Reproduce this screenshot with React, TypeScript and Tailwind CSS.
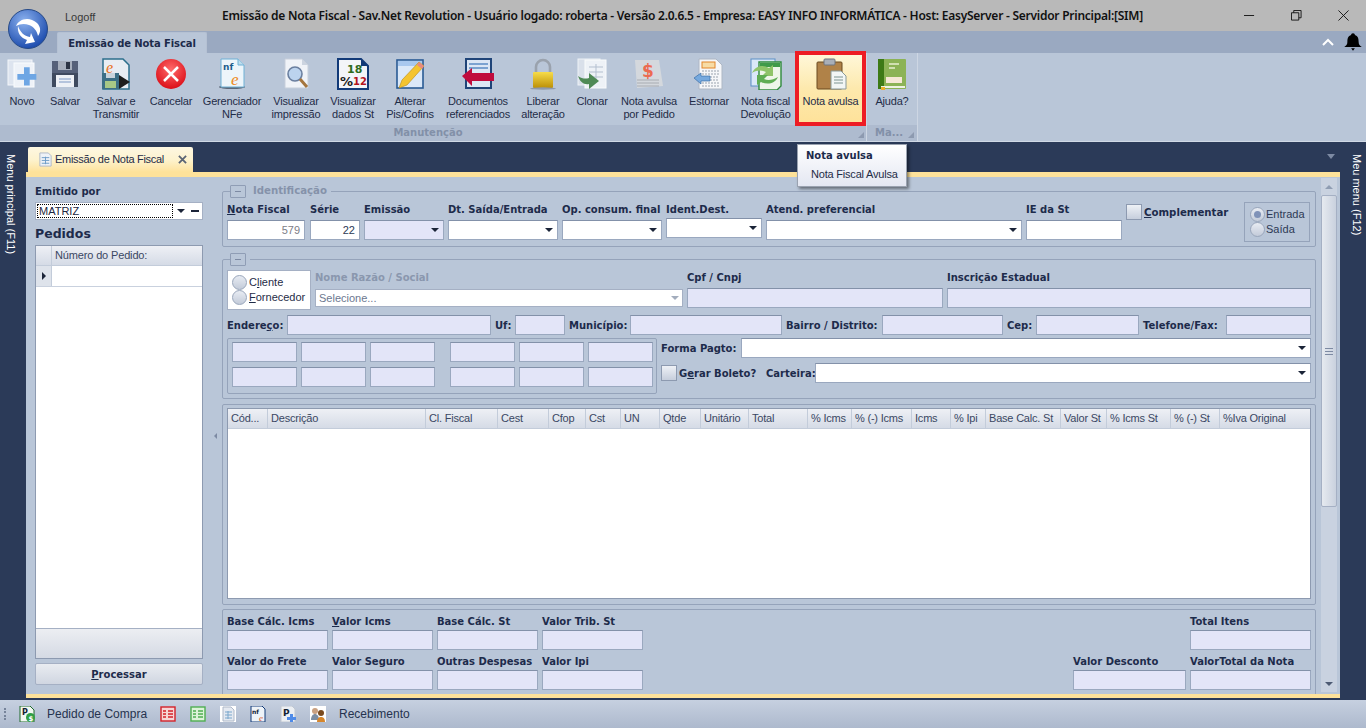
import type { ReactNode } from "react";

const font = "font-['Liberation_Sans',sans-serif]";
const bold = "font-['DejaVu_Sans',sans-serif] font-bold text-[10px] text-[#1d2b4b] whitespace-nowrap leading-none";

function Arrow({ className = "" }: { className?: string }) {
  return <span className={`w-0 h-0 border-x-[4px] border-x-transparent border-t-[4px] border-t-[#1b2438] ${className}`} />;
}

function Input({ w, white, right, combo, className = "" }: { w: number | string; white?: boolean; right?: ReactNode; combo?: boolean; className?: string }) {
  return (
    <div
      style={{ width: w }}
      className={`h-[20px] flex items-center justify-end px-[4px] shrink-0 border border-[#9aa8bf] border-t-[#8391a9] text-[11px] text-[#2d3a55] ${white ? "bg-white" : "bg-[#e3e5f8]"} ${className}`}
    >
      {right}
      {combo && <Arrow />}
    </div>
  );
}

function Field({ label, w, white, right, combo, labelH = "h-[17px] pt-[2px]" }: { label: ReactNode; w: number; white?: boolean; right?: ReactNode; combo?: boolean; labelH?: string }) {
  return (
    <div className="flex flex-col shrink-0" style={{ width: w }}>
      <div className={`${labelH} ${bold} flex items-start`}>
        <span>{label}</span>
      </div>
      <Input w={w} white={white} right={right} combo={combo} />
    </div>
  );
}

function Legend({ title }: { title?: string }) {
  return (
    <div className="absolute left-[7px] top-[-7px] flex items-center bg-[#b9c6d8] pr-[4px]">
      <div className="w-[16px] h-[13px] border border-[#8f9db5] rounded-[1px] flex items-center justify-center">
        <span className="w-[6px] h-px bg-[#7d8aa3]" />
      </div>
      {title && <span className={`${bold} !text-[#8592aa] !text-[10.2px] ml-[7px]`}>{title}</span>}
    </div>
  );
}

function Radio({ checked }: { checked?: boolean }) {
  return (
    <span className="w-[15px] h-[15px] rounded-full border border-[#99a6bb] bg-gradient-to-b from-[#e8ecf3] to-[#c3cbd9] flex items-center justify-center shrink-0">
      {checked && <span className="w-[7px] h-[7px] rounded-full bg-[#7f92b8]" />}
    </span>
  );
}

function Check() {
  return <span className="w-[16px] h-[16px] border border-[#8d9ab0] bg-gradient-to-b from-[#eef1f6] to-[#c6cedc] shrink-0" />;
}

const U = ({ children }: { children: ReactNode }) => <span className="underline">{children}</span>;

// ribbon icons
const icons: Record<string, ReactNode> = {
  novo: (
    <svg viewBox="0 0 32 32" className="w-[32px] h-[32px]">
      <rect x="2" y="2" width="24" height="25" fill="#dde4ef" stroke="#f4f6fa" />
      <rect x="8" y="5" width="20" height="24" fill="#eef2f8" stroke="#fafbfd" />
      <path d="M20 13h6v7h7v6h-7v6h-6v-6h-7v-6h7z" transform="translate(-1 -3) scale(.95)" fill="#6ea6e4" />
    </svg>
  ),
  salvar: (
    <svg viewBox="0 0 32 32" className="w-[32px] h-[32px]">
      <path d="M3 3h26v26H3z" fill="#3f4a5f" />
      <path d="M3 3h26v12H3z" fill="#56617a" />
      <rect x="9" y="3" width="14" height="9" fill="#a7afbd" />
      <rect x="17" y="4" width="4" height="7" fill="#2c3445" />
      <rect x="7" y="17" width="18" height="12" fill="#eef1f6" />
      <path d="M10 21h12M10 24h12" stroke="#7c98c4" />
    </svg>
  ),
  transmitir: (
    <svg viewBox="0 0 32 32" className="w-[32px] h-[32px]">
      <path d="M3 1h20l6 6v24H3z" fill="#e8edf3" stroke="#2c6f8c" strokeWidth="1.5" />
      <text x="6" y="15" fontSize="16" fontStyle="italic" fill="#e8701c" fontFamily="Liberation Serif">e</text>
      <rect x="2" y="15" width="17" height="16" fill="#3d6f86" />
      <rect x="6" y="15" width="9" height="5" fill="#c9d4dc" />
      <rect x="5" y="23" width="11" height="7" fill="#a8c886" />
      <path d="M19 17l11 7-11 7z" fill="#1d1d1d" />
    </svg>
  ),
  cancelar: (
    <svg viewBox="0 0 32 32" className="w-[32px] h-[32px]">
      <defs>
        <radialGradient id="rc" cx=".5" cy=".35" r=".7">
          <stop offset="0" stopColor="#ff6a6a" />
          <stop offset="1" stopColor="#d90812" />
        </radialGradient>
      </defs>
      <circle cx="16" cy="16" r="15" fill="url(#rc)" />
      <path d="M9 9l14 14M23 9L9 23" stroke="#fff" strokeWidth="2.5" />
    </svg>
  ),
  nfe: (
    <svg viewBox="0 0 32 32" className="w-[32px] h-[32px]">
      <ellipse cx="16" cy="29" rx="13" ry="2" fill="#5d6879" />
      <path d="M5 1h17l6 6v22H5z" fill="#edf5fa" stroke="#6eb1d6" />
      <path d="M22 1v6h6" fill="#bcdcec" stroke="#6eb1d6" />
      <text x="7" y="12" fontSize="9" fontWeight="700" fill="#1e5d8c" fontFamily="DejaVu Sans">nf</text>
      <text x="15" y="27" fontSize="17" fontStyle="italic" fill="#ee8a22" fontFamily="Liberation Serif">e</text>
    </svg>
  ),
  visualizar: (
    <svg viewBox="0 0 32 32" className="w-[32px] h-[32px]">
      <path d="M5 1h17l6 6v23H5z" fill="#f0f3f8" stroke="#c7cfdb" />
      <path d="M22 1v6h6z" fill="#ccd4e0" />
      <circle cx="15" cy="16" r="7" fill="#bcd3ee" stroke="#6a7f9f" strokeWidth="1.6" />
      <path d="M20 21l7 8" stroke="#a4753d" strokeWidth="3" />
    </svg>
  ),
  dados: (
    <svg viewBox="0 0 32 32" className="w-[32px] h-[32px]">
      <path d="M1 1h23l7 7v23H1z" fill="#f3f5f8" stroke="#123a78" strokeWidth="2" />
      <path d="M24 1v7h7z" fill="#123a78" />
      <text x="10" y="15" fontSize="11" fontWeight="700" fill="#2e6b1c" fontFamily="DejaVu Sans">18</text>
      <text x="3" y="28" fontSize="13" fontWeight="700" fill="#1c1c1c" fontFamily="DejaVu Sans">%</text>
      <text x="16" y="27" fontSize="10" fontWeight="700" fill="#b3141c" fontFamily="DejaVu Sans">12</text>
    </svg>
  ),
  alterar: (
    <svg viewBox="0 0 32 32" className="w-[32px] h-[32px]">
      <rect x="3" y="2" width="26" height="28" fill="#dbe8f8" stroke="#2a5a94" strokeWidth="1.6" />
      <rect x="4" y="3" width="24" height="5" fill="#a9c8ee" />
      <path d="M25 4l5 4-17 19-8 3 3-8z" fill="#f4c430" stroke="#b98a14" strokeWidth=".6" />
      <path d="M25 4l5 4-2 3-5-4z" fill="#e88a80" />
    </svg>
  ),
  documentos: (
    <svg viewBox="0 0 32 32" className="w-[32px] h-[32px]">
      <rect x="4" y="1" width="25" height="29" fill="#dbe6f4" stroke="#1f4478" strokeWidth="2" />
      <path d="M7 6h19M7 10h19" stroke="#7ba2d0" strokeWidth="2" />
      <path d="M0 18l10-8v5h22v8H10v5z" fill="#c00b3c" />
    </svg>
  ),
  liberar: (
    <svg viewBox="0 0 32 32" className="w-[32px] h-[32px]">
      <defs>
        <linearGradient id="lk" x1="0" x2="0" y1="0" y2="1">
          <stop offset="0" stopColor="#f7dc4a" />
          <stop offset="1" stopColor="#bc8f06" />
        </linearGradient>
      </defs>
      <path d="M9 14V9a7 7 0 0 1 14 0v5" fill="none" stroke="#9aa2ad" strokeWidth="2.6" />
      <rect x="6" y="14" width="20" height="16" rx="1" fill="url(#lk)" />
      <ellipse cx="16" cy="30.500" rx="13" ry="1.200" fill="#8e99aa" />
    </svg>
  ),
  clonar: (
    <svg viewBox="0 0 32 32" className="w-[32px] h-[32px]">
      <rect x="2" y="1" width="22" height="26" fill="#d9e0ea" stroke="#eef1f6" />
      <rect x="9" y="2" width="21" height="28" fill="#eef2f7" stroke="#fafbfc" />
      <path d="M13 9h14M13 14h14M13 19h14M20 6v18" stroke="#b3bfcf" />
      <path d="M2 18c4 3 8 3 11 2v-5l10 8-10 8v-5c-5 1-9-2-11-8z" fill="#4f8a56" />
    </svg>
  ),
  avulsaPedido: (
    <svg viewBox="0 0 32 32" className="w-[32px] h-[32px]">
      <path d="M2 2h24l4 26-26 2z" fill="#d4d8dd" />
      <text x="9" y="19" fontSize="17" fontWeight="700" fill="#ec6b50" fontFamily="DejaVu Sans">$</text>
      <path d="M4 22h22M4 25h22M4 28h22" stroke="#a8acb2" />
    </svg>
  ),
  estornar: (
    <svg viewBox="0 0 32 32" className="w-[32px] h-[32px]">
      <path d="M6 1h17l6 6v24H6z" fill="#f6f7f9" stroke="#aeb7c4" />
      <rect x="9" y="4" width="13" height="6" fill="#f7dca6" stroke="#e2862a" />
      <path d="M9 13h17M9 16h17M14 19h12M14 22h12M9 25h17M9 28h17" stroke="#9aa3ae" strokeDasharray="2 1" />
      <path d="M1 20l7-5v3h9v5H8v3z" fill="#76a9de" stroke="#3b6ea8" strokeWidth=".7" />
    </svg>
  ),
  devolucao: (
    <svg viewBox="0 0 32 32" className="w-[32px] h-[32px]">
      <rect x="1" y="1" width="24" height="27" fill="#dae8f8" stroke="#5d8fc6" />
      <path d="M9 4h22v24l-4 4H9z" fill="#eef6ea" stroke="#2f8a3c" strokeWidth="1.4" />
      <rect x="10" y="5" width="20" height="4" fill="#3f9a4a" />
      <path d="M2 15c3-7 11-9 17-5l4-3v11H12l4-4c-4-2-9-2-14 1z" fill="#8fc46a" />
      <path d="M28 19c-3 7-11 8-17 5l-4 3V17h11l-4 4c4 2 9 1 14-2z" fill="#5fae54" />
    </svg>
  ),
  avulsa: (
    <svg viewBox="0 0 32 32" className="w-[32px] h-[32px]">
      <rect x="2" y="4" width="25" height="27" rx="1" fill="#b08248" stroke="#6b4a20" />
      <rect x="9" y="1" width="11" height="6" rx="1" fill="#a9afb8" stroke="#6f757e" />
      <path d="M16 13h10l5 5v13H16z" fill="#f2f6f5" stroke="#8a9a98" />
      <path d="M19 19h9M19 22h9M19 25h9" stroke="#7d9490" />
    </svg>
  ),
  ajuda: (
    <svg viewBox="0 0 32 32" className="w-[32px] h-[32px]">
      <rect x="4" y="1" width="26" height="30" rx="1" fill="#8cb356" />
      <rect x="2" y="1" width="6" height="30" fill="#3d7a16" />
      <path d="M13 6h10M13 10h6" stroke="#e6f0d0" strokeWidth="1.600" />
      <rect x="10" y="19" width="16" height="6" fill="#f6e8d6" />
      <rect x="5" y="28" width="24" height="2" fill="#eef3e2" />
      <rect x="5" y="29" width="4" height="3" fill="#eab12c" />
    </svg>
  ),
};

const ribbon: { w: number; icon: string; label: string[] }[] = [
  { w: 44, icon: "novo", label: ["Novo"] },
  { w: 42, icon: "salvar", label: ["Salvar"] },
  { w: 60, icon: "transmitir", label: ["Salvar e", "Transmitir"] },
  { w: 50, icon: "cancelar", label: ["Cancelar"] },
  { w: 72, icon: "nfe", label: ["Gerenciador", "NFe"] },
  { w: 56, icon: "visualizar", label: ["Visualizar", "impressão"] },
  { w: 58, icon: "dados", label: ["Visualizar", "dados St"] },
  { w: 56, icon: "alterar", label: ["Alterar", "Pis/Cofins"] },
  { w: 80, icon: "documentos", label: ["Documentos", "referenciados"] },
  { w: 50, icon: "liberar", label: ["Liberar", "alteração"] },
  { w: 48, icon: "clonar", label: ["Clonar"] },
  { w: 66, icon: "avulsaPedido", label: ["Nota avulsa", "por Pedido"] },
  { w: 54, icon: "estornar", label: ["Estornar"] },
  { w: 59, icon: "devolucao", label: ["Nota fiscal", "Devolução"] },
];

function RibbonLabel({ lines }: { lines: string[] }) {
  return (
    <div className="text-[11px] tracking-[-0.2px] leading-[13px] text-[#1f2c47] text-center whitespace-nowrap mt-[5px]">
      {lines.map((l) => (
        <div key={l}>{l}</div>
      ))}
    </div>
  );
}

function Corner() {
  return <span className="w-0 h-0 border-l-[6px] border-l-transparent border-b-[6px] border-b-[#8d9ab0]" />;
}

function Ribbon() {
  return (
    <div className="h-[89px] bg-[#b9c6d8] flex shrink-0 border-b border-[#d0d9e5]">
      <div className="w-[867px] flex flex-col relative border-r border-[#cdd6e3]">
        <div className="flex h-[72px] shrink-0">
          {ribbon.map((r) => (
            <div key={r.icon} style={{ width: r.w }} className="flex flex-col items-center pt-[5px] shrink-0">
              {icons[r.icon]}
              <RibbonLabel lines={r.label} />
            </div>
          ))}
        </div>
        <div className="flex-1 bg-[#aebbcf] flex items-center justify-center pr-[10px]">
          <span className={`${bold} !text-[#8290a8]`}>Manutenção</span>
        </div>
        <div className="absolute right-[2px] bottom-[3px] flex"><Corner /></div>
        <div className="absolute left-[795px] top-[-2px] w-[71px] h-[75px] border-[4px] border-[#ed1c24] bg-gradient-to-b from-[#fff7d8] via-[#fde9ad] to-[#fee29a] flex flex-col items-center pt-[3px]">
          {icons.avulsa}
          <RibbonLabel lines={["Nota avulsa"]} />
        </div>
      </div>
      <div className="w-[51px] flex flex-col relative border-r border-[#cdd6e3]">
        <div className="h-[72px] flex flex-col items-center pt-[5px]">
          {icons.ajuda}
          <RibbonLabel lines={["Ajuda?"]} />
        </div>
        <div className="flex-1 bg-[#aebbcf] flex items-center pl-[8px]">
          <span className={`${bold} !text-[#8290a8]`}>Ma...</span>
        </div>
        <div className="absolute right-[3px] bottom-[3px] flex"><Corner /></div>
      </div>
    </div>
  );
}

function TitleBar() {
  return (
    <div className="h-[31px] bg-[#b9b9b9] flex items-center shrink-0 relative">
      <span className="absolute left-[65px] top-[9px] text-[11px] text-[#3a3a3a]">Logoff</span>
      <div className="ml-[222px] font-['Noto_Sans',sans-serif] text-[12px] tracking-[-0.25px] font-semibold text-[#111] whitespace-nowrap w-[921px]">
        Emissão de Nota Fiscal - Sav.Net Revolution - Usuário logado: roberta - Versão 2.0.6.5 - Empresa: EASY INFO INFORMÁTICA - Host: EasyServer - Servidor Principal:[SIM]
      </div>
      <div className="ml-auto flex items-center mr-[17px] gap-[36px]">
        <svg viewBox="0 0 12 12" className="w-[11px] h-[11px]"><path d="M0 6h11" stroke="#111" /></svg>
        <svg viewBox="0 0 12 12" className="w-[11px] h-[11px]"><path d="M.5 3h8v8h-8zM3 3V.5h8v8H8.500" fill="none" stroke="#111" /></svg>
        <svg viewBox="0 0 12 12" className="w-[11px] h-[11px]"><path d="M.5.5l11 11M11.500.5l-11 11" stroke="#111" /></svg>
      </div>
    </div>
  );
}

function TabRow() {
  return (
    <div className="h-[22px] bg-[#9aa9c1] flex items-end shrink-0">
      <div className="ml-[57px] w-[150px] h-[21px] bg-[#b9c6d8] rounded-t-[2px] border-t border-x border-[#b5c1d3] flex items-center justify-center">
        <span className="font-['DejaVu_Sans',sans-serif] text-[10px] tracking-[-0.1px] font-bold text-[#1d2b4b] whitespace-nowrap">Emissão de Nota Fiscal</span>
      </div>
      <div className="ml-auto flex items-center h-full mr-[3px] gap-[9px]">
        <svg viewBox="0 0 12 8" className="w-[12px] h-[8px]"><path d="M1 7l5-5 5 5" fill="none" stroke="#fff" strokeWidth="2" /></svg>
        <svg viewBox="0 0 16 16" className="w-[20px] h-[20px]"><path d="M8 1c1 0 1.500.7 1.500 1.300C12 3 12.500 5 12.500 8c0 2 1 3 2.500 4H1c1.500-1 2.500-2 2.500-4 0-3 .5-5 3-5.700C6.500 1.700 7 1 8 1zM6.500 13h3L8 15z" fill="#000" /></svg>
      </div>
    </div>
  );
}

function LeftPanel() {
  return (
    <div className="w-[168px] ml-[9px] shrink-0 flex flex-col">
      <div className={`${bold} h-[25px] pt-[10px]`}>Emitido por</div>
      <div className="h-[18px] bg-white border border-[#a5b0c4] flex items-center pl-[1px] pr-[3px]">
        <div className="w-[138px] h-[14px] border border-dotted border-black text-[11px] leading-none text-[#1c2740] pl-[1px] flex items-center">MATRIZ</div>
        <Arrow className="ml-[4px]" />
        <span className="w-[8px] h-[2px] bg-[#1b2438] ml-[6px]" />
      </div>
      <div className="h-[25px] pt-[3px] flex items-center font-['DejaVu_Sans',sans-serif] font-bold text-[12.500px] text-[#1d2b4b]">Pedidos</div>
      <div className="h-[414px] border border-[#8d9ab0] bg-white flex flex-col">
        <div className="flex h-[20px] shrink-0 bg-gradient-to-b from-[#eef0f5] to-[#d5dbe6] border-b border-[#c3ccda]">
          <div className="w-[16px] border-r border-[#c3ccda]" />
          <span className="pl-[3px] text-[11px] tracking-[-0.15px] text-[#3a4763] leading-[19px] whitespace-nowrap">Número do Pedido:</span>
        </div>
        <div className="flex h-[21px] shrink-0 border-b border-[#c9d1de]">
          <div className="w-[16px] bg-[#dee3eb] border-r border-[#c3ccda] flex items-center justify-center">
            <span className="w-0 h-0 border-y-[4px] border-y-transparent border-l-[4px] border-l-[#1b2438]" />
          </div>
        </div>
        <div className="flex-1" />
        <div className="h-[30px] shrink-0 border-t border-[#a5b0c4] bg-gradient-to-b from-[#eceef2] to-[#d5dae4]" />
      </div>
      <div className="mt-[4px] h-[22px] rounded-[2px] border border-[#a5b0c4] bg-gradient-to-b from-[#e9ecf1] to-[#d0d6e1] flex items-center justify-center">
        <span className={`${bold} pt-[2px]`}><U>P</U>rocessar</span>
      </div>
    </div>
  );
}

const columns: [string, number][] = [
  ["Cód...", 40], ["Descrição", 158], ["Cl. Fiscal", 72], ["Cest", 51], ["Cfop", 37], ["Cst", 35], ["UN", 39],
  ["Qtde", 41], ["Unitário", 48], ["Total", 59], ["% Icms", 44], ["% (-) Icms", 60], ["Icms", 39], ["% Ipi", 35],
  ["Base Calc. St", 75], ["Valor St", 46], ["% Icms St", 64], ["% (-) St", 49], ["%Iva Original", 90],
];

function Group({ className = "", children }: { className?: string; children: ReactNode }) {
  return <div className={`relative w-[1094px] ml-[2px] border border-[#95a3ba] rounded-[2px] shrink-0 px-[4px] ${className}`}>{children}</div>;
}

function Lab({ w, children, className = "" }: { w?: number; children: ReactNode; className?: string }) {
  return <span style={{ width: w }} className={`${bold} pt-[2px] shrink-0 ${className}`}>{children}</span>;
}

function Form() {
  return (
    <div className="w-[1098px] shrink-0 flex flex-col">
      <Group className="mt-[14px] h-[56px] pt-[11px]">
        <Legend title="Identificação" />
        <div className="flex items-start">
          <Field label={<><U>N</U>ota Fiscal</>} w={78} white right={<span className="text-[#7d7d86]">579</span>} />
          <div className="w-[5px]" />
          <Field label="Série" w={50} white right="22" />
          <div className="w-[4px]" />
          <Field label="Emissão" w={80} combo />
          <div className="w-[4px]" />
          <Field label="Dt. Saída/Entrada" w={110} white combo />
          <div className="w-[4px]" />
          <Field label="Op. consum. final" w={100} white combo />
          <div className="w-[4px]" />
          <Field label="Ident.Dest." w={96} white combo labelH="h-[15px] pt-[2px]" />
          <div className="w-[4px]" />
          <Field label="Atend. preferencial" w={256} white combo />
          <div className="w-[4px]" />
          <Field label="IE da St" w={96} white />
          <div className="w-[4px]" />
          <div className="w-[118px] flex items-center gap-[2px] mt-[1px]">
            <Check />
            <Lab className="!text-[10.2px]"><U>C</U>omplementar</Lab>
          </div>
          <div className="w-[66px] h-[40px] -mt-[1px] border border-[#95a3ba] flex flex-col justify-center pl-[5px] text-[11px] text-[#2d3a55] leading-none">
            <div className="flex items-center gap-[1px] h-[15px]"><Radio checked />Entrada</div>
            <div className="flex items-center gap-[1px] h-[15px]"><Radio />Saída</div>
          </div>
        </div>
      </Group>

      <Group className="mt-[12px] h-[140px] pt-[10px]">
        <Legend />
        <div className="flex items-start">
          <div className="w-[84px] h-[40px] bg-white border border-[#a5b0c4] flex flex-col justify-center pl-[4px] text-[11px] text-[#1f2c47] leading-none">
            <div className="flex items-center gap-[2px] h-[15px]"><Radio /><span>C<U>l</U>iente</span></div>
            <div className="flex items-center gap-[2px] h-[15px]"><Radio /><span><U>F</U>ornecedor</span></div>
          </div>
          <div className="w-[4px]" />
          <div className="flex flex-col shrink-0 w-[368px] pt-[1px]">
            <div className={`${bold} !text-[#8a97ae] h-[18px] pt-[2px]`}>Nome Razão / Social</div>
            <div className="h-[18px] bg-white border border-[#a5b0c4] flex items-center justify-between px-[3px] text-[11px] text-[#6c7890]">
              Selecione...
              <span className="w-0 h-0 border-x-[4px] border-x-transparent border-t-[4px] border-t-[#a3adbd]" />
            </div>
          </div>
          <div className="w-[4px]" />
          <div className="pt-[1px]"><Field label="Cpf / Cnpj" w={256} /></div>
          <div className="w-[4px]" />
          <div className="pt-[1px]"><Field label="Inscrição Estadual" w={364} /></div>
        </div>
        <div className="flex items-center mt-[5px] h-[19px]">
          <Lab w={60}>Endere<U>ç</U>o:</Lab>
          <Input w={204} />
          <Lab w={20} className="ml-[4px]">Uf:</Lab>
          <Input w={50} />
          <Lab w={61} className="ml-[4px]">Município:</Lab>
          <Input w={152} />
          <Lab w={96} className="ml-[4px]">Bairro / Distrito:</Lab>
          <Input w={121} />
          <Lab w={29} className="ml-[4px]">Cep:</Lab>
          <Input w={103} />
          <Lab w={83} className="ml-[4px]">Telefone/Fax:</Lab>
          <Input w={85} />
        </div>
        <div className="flex mt-[4px] items-start">
          <div className="w-[430px] h-[56px] border border-[#95a3ba] rounded-[2px] pl-[4px] pr-[3px] pt-[3px] flex flex-col gap-[5px] shrink-0">
            {[0, 1].map((row) => (
              <div key={row} className="flex gap-[4px]">
                <Input w={65} /><Input w={65} /><Input w={65} />
                <div className="w-[7px]" />
                <Input w={65} /><Input w={65} /><Input w={65} />
              </div>
            ))}
          </div>
          <div className="flex flex-col ml-[4px] w-[650px]">
            <div className="flex items-center">
              <Lab w={80}>Forma Pagto:</Lab>
              <Input w={570} white combo />
            </div>
            <div className="flex items-center mt-[5px]">
              <Check />
              <Lab w={87} className="ml-[2px]">G<U>e</U>rar Boleto?</Lab>
              <Lab w={49}>Carteira:</Lab>
              <Input w={496} white combo />
            </div>
          </div>
        </div>
      </Group>

      <Group className="mt-[5px] h-[201px] pt-[3px]">
        <div className="w-[1084px] h-[191px] border border-[#8d9ab0] bg-white">
          <div className="flex h-[20px] bg-gradient-to-b from-[#eef0f5] to-[#d5dbe6] border-b border-[#c3ccda]">
            {columns.map(([name, w]) => (
              <div key={name} style={{ width: w }} className="shrink-0 border-r border-[#c3ccda] px-[3px] text-[11px] tracking-[-0.2px] leading-[18px] text-[#3a4763] whitespace-nowrap overflow-hidden last:border-r-0">
                {name}
              </div>
            ))}
          </div>
        </div>
      </Group>

      <Group className="mt-[4px] h-[100px] pt-[4px]">
        <div className="flex">
          <Field label="Base Cálc. Icms" w={101} labelH="h-[16px] pt-[3px]" />
          <div className="w-[4px]" />
          <Field label={<><U>V</U>alor Icms</>} w={101} labelH="h-[16px] pt-[3px]" />
          <div className="w-[4px]" />
          <Field label="Base Cálc. St" w={101} labelH="h-[16px] pt-[3px]" />
          <div className="w-[4px]" />
          <Field label="Valor Trib. St" w={101} labelH="h-[16px] pt-[3px]" />
          <div className="ml-auto"><Field label="Total Itens" w={121} labelH="h-[16px] pt-[3px]" /></div>
        </div>
        <div className="flex">
          <Field label="Valor do Frete" w={101} labelH="h-[20px] pt-[7px]" />
          <div className="w-[4px]" />
          <Field label="Valor Seguro" w={101} labelH="h-[20px] pt-[7px]" />
          <div className="w-[4px]" />
          <Field label="Outras Despesas" w={101} labelH="h-[20px] pt-[7px]" />
          <div className="w-[4px]" />
          <Field label="Valor Ipi" w={101} labelH="h-[20px] pt-[7px]" />
          <div className="ml-auto"><Field label="Valor Desconto" w={113} labelH="h-[20px] pt-[7px]" /></div>
          <div className="w-[4px]" />
          <Field label="ValorTotal da Nota" w={121} labelH="h-[20px] pt-[7px]" />
        </div>
      </Group>
    </div>
  );
}

function ScrollBar() {
  return (
    <div className="w-[16px] ml-[3px] mt-[1px] h-[514px] shrink-0 bg-[#c9d2e0] flex flex-col">
      <div className="h-[17px] flex items-center justify-center">
        <span className="w-0 h-0 border-x-[4px] border-x-transparent border-b-[4px] border-b-[#8f9db3]" />
      </div>
      <div className="h-[312px] rounded-[2px] border border-[#a5b0c4] bg-gradient-to-r from-[#e6eaf0] to-[#c9d1de] flex items-center justify-center">
        <div className="w-[8px] h-[7px] border-y border-[#7d8aa3] flex items-center"><span className="w-full h-px bg-[#7d8aa3]" /></div>
      </div>
      <div className="flex-1" />
      <div className="h-[17px] flex items-center justify-center">
        <span className="w-0 h-0 border-x-[4px] border-x-transparent border-t-[4px] border-t-[#4d5a73]" />
      </div>
    </div>
  );
}

function StatusIcon({ children }: { children: ReactNode }) {
  return <svg viewBox="0 0 16 16" className="w-[16px] h-[16px] shrink-0">{children}</svg>;
}

function StatusBar() {
  return (
    <div className="h-[28px] mt-auto bg-gradient-to-b from-[#c6d0e0] to-[#adb9cd] flex items-center shrink-0 text-[12px] text-[#26334f]">
      <div className="ml-[4px] w-[2px] h-[12px] flex flex-col justify-between">
        {[0, 1, 2, 3].map((i) => <span key={i} className="w-[2px] h-[2px] bg-[#76839a]" />)}
      </div>
      <div className="ml-[13px]">
        <StatusIcon>
          <path d="M1 0h10l4 4v12H1z" fill="#f2f7f0" stroke="#1e6b2c" />
          <text x="3" y="9" fontSize="8" fontWeight="700" fill="#123" fontFamily="DejaVu Sans">P</text>
          <circle cx="11.500" cy="11.500" r="4.500" fill="#2f9e44" />
          <text x="9.500" y="14.500" fontSize="7" fontWeight="700" fill="#fff" fontFamily="DejaVu Sans">$</text>
        </StatusIcon>
      </div>
      <span className="ml-[12px] whitespace-nowrap w-[113px]">Pedido de Compra</span>
      <StatusIcon>
        <rect x="1" y="1" width="14" height="14" fill="#f6d5d5" stroke="#d3222a" strokeWidth="1.400" />
        <path d="M3 5h3M8 5h5M3 8h3M8 8h5M3 11h3M8 11h5" stroke="#d3222a" strokeWidth="1.400" />
      </StatusIcon>
      <div className="ml-[14px]">
        <StatusIcon>
          <rect x="1" y="1" width="14" height="14" fill="#dcf3d8" stroke="#4fae52" strokeWidth="1.400" />
          <path d="M3 5h3M8 5h5M3 8h3M8 8h5M3 11h3M8 11h5" stroke="#4fae52" strokeWidth="1.400" />
        </StatusIcon>
      </div>
      <div className="ml-[14px]">
        <StatusIcon>
          <rect width="16" height="16" fill="#fff" />
          <path d="M3 1h8l3 3v11H3z" fill="#e4e9f1" stroke="#aeb8c8" />
          <path d="M5 6h7M5 9h7M5 12h7M8 5v8" stroke="#7ba7cc" />
        </StatusIcon>
      </div>
      <div className="ml-[14px]">
        <StatusIcon>
          <path d="M1 0h11l3 3v13H1z" fill="#eef3f8" stroke="#123a78" />
          <text x="2" y="8" fontSize="6" fontWeight="700" fill="#123" fontFamily="DejaVu Sans">nf</text>
          <text x="9" y="15" fontSize="9" fontStyle="italic" fill="#d9541e" fontFamily="Liberation Serif">e</text>
        </StatusIcon>
      </div>
      <div className="ml-[14px]">
        <StatusIcon>
          <path d="M1 0h11l3 3v13H1z" fill="#eceff3" stroke="#c0c7d1" />
          <text x="3" y="10" fontSize="9" fontWeight="700" fill="#123" fontFamily="DejaVu Sans">P</text>
          <path d="M10 8h3v3h3v3h-3v2h-3v-2H7v-3h3z" fill="#4f8be8" />
        </StatusIcon>
      </div>
      <div className="ml-[14px]">
        <StatusIcon>
          <rect width="16" height="16" fill="#fff" />
          <circle cx="5" cy="5" r="3" fill="#c9a080" />
          <path d="M1 14c0-4 2-6 4-6s4 2 4 6z" fill="#7d8ea3" />
          <circle cx="11" cy="7" r="3" fill="#7a4a1e" />
          <path d="M7 16c0-4 2-5 4-5s4 1 4 5z" fill="#d6862c" />
        </StatusIcon>
      </div>
      <span className="ml-[13px] whitespace-nowrap">Recebimento</span>
    </div>
  );
}

export default function App() {
  return (
    <div className={`w-[1366px] h-[728px] relative overflow-hidden flex flex-col bg-[#2b3a58] ${font}`}>
      <TitleBar />
      <TabRow />
      <Ribbon />

      <div className="flex h-[556px] shrink-0">
        <div className="w-[26px] shrink-0 flex justify-start pl-[5px] pt-[12px]">
          <span className="[writing-mode:vertical-rl] text-[11px] text-white whitespace-nowrap leading-none">Menu principal (F11)</span>
        </div>
        <div className="w-[1314px] shrink-0 flex flex-col">
          <div className="h-[30px] shrink-0 flex items-end relative">
            <div className="ml-[2px] w-[165px] h-[25px] rounded-t-[2px] bg-gradient-to-b from-[#fdf7e2] via-[#fdf3cf] to-[#fee29a] flex items-center">
              <svg viewBox="0 0 16 16" className="w-[15px] h-[15px] ml-[10px] shrink-0">
                <path d="M2 1h9l3 3v11H2z" fill="#eef2f7" stroke="#aeb8c8" />
                <path d="M4 6h8M4 9h8M4 12h8M8 5v8" stroke="#6d9cc8" />
              </svg>
              <span className="ml-[2px] text-[11px] tracking-[-0.3px] text-[#1f2c47] whitespace-nowrap">Emissão de Nota Fiscal</span>
              <svg viewBox="0 0 10 10" className="w-[9px] h-[9px] ml-auto mr-[6px]"><path d="M1 1l8 8M9 1l-8 8" stroke="#5a6475" strokeWidth="2" /></svg>
            </div>
            <span className="absolute right-[5px] top-[12px] w-0 h-0 border-x-[4px] border-x-transparent border-t-[5px] border-t-[#7d8aa3]" />
          </div>
          <div className="h-[5px] shrink-0 bg-[#fee29a]" />
          <div className="h-[517px] shrink-0 bg-[#b9c6d8] flex overflow-hidden">
            <LeftPanel />
            <div className="w-[17px] shrink-0 flex items-center justify-end pr-[3px]">
              <span className="w-0 h-0 border-y-[3px] border-y-transparent border-r-[3px] border-r-[#7d8aa3]" />
            </div>
            <Form />
            <ScrollBar />
          </div>
          <div className="h-[4px] shrink-0 bg-[#fee29a]" />
        </div>
        <div className="w-[26px] shrink-0 flex justify-end pr-[4px] pt-[12px]">
          <span className="[writing-mode:vertical-rl] text-[11px] text-white whitespace-nowrap leading-none">Meu menu (F12)</span>
        </div>
      </div>

      <StatusBar />

      {/* logo over the title and tab row */}
      <svg viewBox="0 0 40 40" className="absolute left-[8px] top-[9px] w-[40px] h-[40px]">
        <defs>
          <radialGradient id="logo" cx=".4" cy=".3" r=".8">
            <stop offset="0" stopColor="#8cb2ee" />
            <stop offset="1" stopColor="#0f3fa6" />
          </radialGradient>
        </defs>
        <circle cx="20" cy="20" r="19.500" fill="url(#logo)" stroke="#274a86" />
        <path d="M8 17c3-7 13-10 21-3 4 4 4 9 1 13-1-5-4-9-9-11-5-2-9-1-13 1z" fill="#fff" />
        <path d="M10 17c2 6 6 10 12 11l1-4 4 9-10 2 2-4c-6-2-10-7-9-14z" fill="#fff" />
      </svg>

      {/* tooltip of the hovered ribbon button */}
      <div className="absolute left-[797px] top-[144px] w-[110px] h-[43px] bg-gradient-to-b from-white to-[#e4e7f2] border border-[#9aa2b0] shadow-[2px_2px_3px_rgba(0,0,0,0.45)] text-[#1f2c47]">
        <div className={`${bold} ml-[8px] mt-[6px]`}>Nota avulsa</div>
        <div className="ml-[13px] mt-[8px] text-[11px] tracking-[-0.2px] leading-none whitespace-nowrap">Nota Fiscal Avulsa</div>
      </div>
    </div>
  );
}
